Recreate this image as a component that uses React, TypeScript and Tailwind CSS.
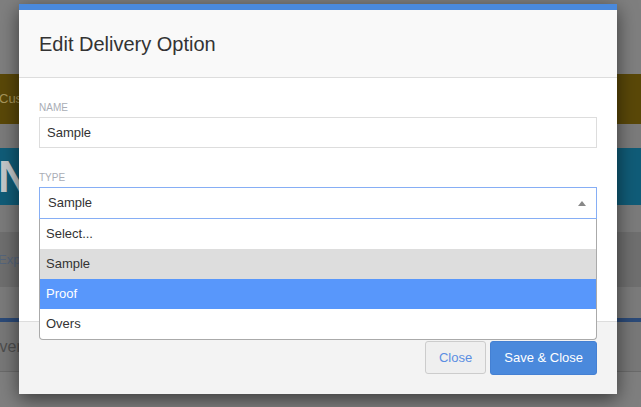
import { useState } from 'react';

const options = ['Select...', 'Sample', 'Proof', 'Overs'];

export default function App() {
  const [name, setName] = useState('Sample');
  const [type, setType] = useState('Sample');
  const [hover] = useState('Proof');

  return (
    <div className="relative h-[407px] w-[641px] overflow-hidden bg-[#7f7f7f] font-['Liberation_Sans',Arial,sans-serif]">
      {/* page behind the dimmed backdrop */}
      <div className="flex flex-col">
        <div className="h-[74px]" />
        <div className="flex h-[50px] items-center bg-[#5a4808] text-[13px] text-[#a8975c]">
          <span className="-ml-[1px]">Customers</span>
        </div>
        <div className="h-[24px] bg-[#7b7b7b]" />
        <div className="flex h-[57px] items-center bg-[#105c78] text-[44px] font-bold leading-none text-[#c4c8ca]">
          <span className="-ml-[2px]">N</span>
        </div>
        <div className="h-[27px] bg-[#7b7b7b]" />
        <div className="flex h-[55px] items-center bg-[#6f6f6f] text-[13px] text-[#55657c]">
          <span className="-ml-[2px]">Export</span>
        </div>
        <div className="h-[31px] bg-[#7b7b7b]" />
        <div className="h-[4px] bg-[#2b4a78]" />
        <div className="flex h-[50px] items-center border-b border-[#6a6a6a] bg-[#787878] text-[16px] text-[#4e4e4e]">
          <span className="-ml-[28px]">Delivery</span>
        </div>
      </div>

      {/* modal */}
      <div className="absolute left-[19px] top-[4px] flex w-[598px] flex-col border-t-[6px] border-[#4a89dc] bg-white shadow-[0_5px_18px_rgba(0,0,0,0.55)]">
        <div className="flex h-[68px] items-center border-b border-[#dddddd] bg-[#f9f9f9] px-5">
          <h1 className="text-[20px] text-[#333333]">Edit Delivery Option</h1>
        </div>

        <div className="flex h-[243px] flex-col px-5 pt-[25px]">
          <label className="text-[10px] uppercase leading-none text-[#a9adb5]">Name</label>
          <input
            value={name}
            onChange={(e) => setName(e.target.value)}
            className="mt-[4px] h-[31px] w-full border border-[#dddddd] px-[7px] text-[13px] text-[#333333] outline-none"
          />

          <label className="mt-[25px] text-[10px] uppercase leading-none text-[#a9adb5]">Type</label>
          <div className="relative mt-[4px]">
            <div className="flex h-[32px] items-center justify-between border border-[#86aef5] px-[8px] text-[13px] text-[#333333]">
              <span>{type}</span>
              <span className="mr-[2px] h-0 w-0 border-x-[4px] border-b-[5px] border-x-transparent border-b-[#888888]" />
            </div>
            <ul className="absolute left-0 top-[32px] z-10 w-[558px] overflow-hidden rounded-b-[4px] border border-t-0 border-[#aaaaaa] bg-white text-[13px]">
              {options.map((opt) => (
                <li
                  key={opt}
                  onClick={() => setType(opt)}
                  className={
                    opt === hover
                      ? 'flex h-[30px] items-center bg-[#5897fb] px-[6px] text-white'
                      : opt === type
                        ? 'flex h-[30px] items-center bg-[#dddddd] px-[6px] text-[#333333]'
                        : 'flex h-[30px] items-center px-[6px] text-[#333333]'
                  }
                >
                  {opt}
                </li>
              ))}
            </ul>
          </div>
        </div>

        <div className="flex h-[73px] items-start justify-end gap-[4px] border-t border-[#dddddd] bg-[#f3f3f3] px-5 pt-[19px]">
          <button className="h-[33px] rounded-[3px] border border-[#cccccc] bg-[#efefef] px-[13px] text-[13px] text-[#5b8ee2]">
            Close
          </button>
          <button className="h-[34px] rounded-[3px] border border-[#4480d3] bg-[#4a89dc] px-[13px] text-[13px] text-white">
            Save &amp; Close
          </button>
        </div>
      </div>
    </div>
  );
}
